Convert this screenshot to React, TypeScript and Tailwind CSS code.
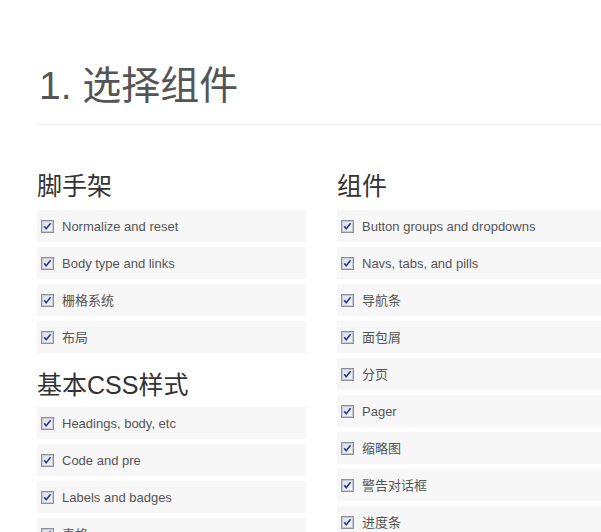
import React from "react";

const Check = () => (
  <svg width="13" height="13" viewBox="0 0 13 13" className="shrink-0">
    <defs>
      <linearGradient id="cbg" x1="0" y1="0" x2="1" y2="1">
        <stop offset="0" stopColor="#dcdfe6" />
        <stop offset="1" stopColor="#f6f7f9" />
      </linearGradient>
    </defs>
    <rect x="0.5" y="0.5" width="12" height="12" fill="#f4f5f7" stroke="#8c9099" />
    <rect x="1.5" y="1.5" width="10" height="10" fill="url(#cbg)" stroke="#c5cad6" />
    <path d="M3.2 6.2 L5.2 8.8 L9.6 3.3" fill="none" stroke="#2a3a8c" strokeWidth="1.6" />
  </svg>
);

const Row = ({ label }: { label: string }) => (
  <div className="h-[32px] mb-[5px] bg-[#f7f7f7] flex items-center pl-[4px] gap-[8px] text-[13px] text-[#555] whitespace-nowrap overflow-hidden">
    <Check />
    <span className="leading-none">{label}</span>
  </div>
);

const H2 = ({ children, className = "" }: { children: React.ReactNode; className?: string }) => (
  <h2 className={`text-[25px] leading-[30px] h-[30px] text-[#333] font-normal ${className}`}>{children}</h2>
);

export default function App() {
  const left1 = ["Normalize and reset", "Body type and links", "栅格系统", "布局"];
  const left2 = ["Headings, body, etc", "Code and pre", "Labels and badges", "表格"];
  const right = [
    "Button groups and dropdowns",
    "Navs, tabs, and pills",
    "导航条",
    "面包屑",
    "分页",
    "Pager",
    "缩略图",
    "警告对话框",
    "进度条",
  ];
  return (
    <div
      className="w-[601px] h-[532px] overflow-hidden bg-white"
      style={{ fontFamily: '"Liberation Sans", Arial, "Noto Sans CJK SC", sans-serif' }}
    >
      <div className="pl-[37px] pt-[64px]">
        <h1 className="text-[39px] leading-[44px] h-[44px] text-[#555] font-normal pl-[2px]">1. 选择组件</h1>
        <div className="mt-[16px] border-t border-[#eeeeee]" />
        <div className="flex gap-[31px] pt-[46px]">
          <div className="w-[269px] shrink-0">
            <H2 className="mb-[9px]">脚手架</H2>
            {left1.map((l) => (
              <Row key={l} label={l} />
            ))}
            <H2 className="mt-[17px] mb-[7px]">基本CSS样式</H2>
            {left2.map((l) => (
              <Row key={l} label={l} />
            ))}
          </div>
          <div className="w-[269px] shrink-0">
            <H2 className="mb-[9px]">组件</H2>
            {right.map((l) => (
              <Row key={l} label={l} />
            ))}
          </div>
        </div>
      </div>
    </div>
  );
}
